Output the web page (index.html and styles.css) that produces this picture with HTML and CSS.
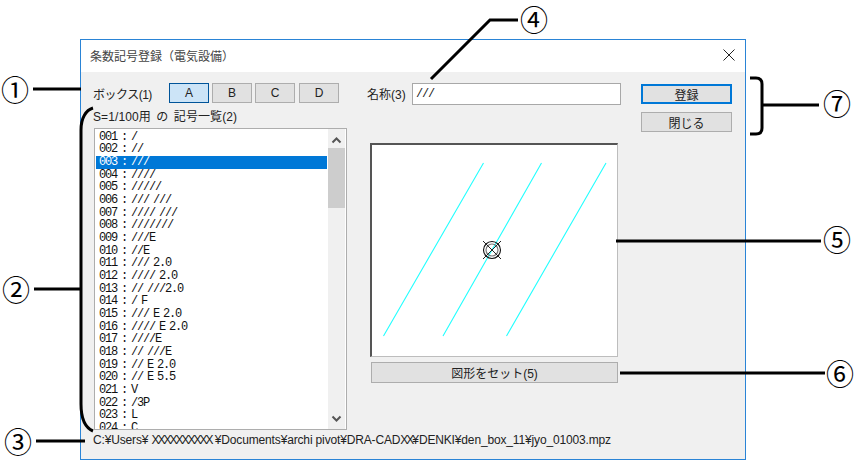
FILE: index.html
```html
<!DOCTYPE html>
<html lang="ja">
<head>
<meta charset="utf-8">
<title>条数記号登録</title>
<link rel="stylesheet" href="styles.css">
</head>
<body>
<div class="page">
  <section class="dialog">
    <header class="titlebar">
      <span class="title">条数記号登録（電気設備）</span>
      <svg class="close" width="12" height="12" viewBox="0 0 12 12"><path d="M.5.5l11 11M11.5.5l-11 11" stroke="#222" stroke-width="1" fill="none"/></svg>
    </header>
    <div class="content">
      <div class="main">
        <div class="left">
          <div class="boxes">
            <span class="box-label">ボックス(1)</span>
            <button class="btn tab active">A</button>
            <button class="btn tab">B</button>
            <button class="btn tab">C</button>
            <button class="btn tab d">D</button>
          </div>
          <div class="list-label">S=1/100用 の 記号一覧(2)</div>
          <div class="list">
            <ul class="rows">
              <li>001 : /</li>
              <li>002 : //</li>
              <li class="sel">003 : ///</li>
              <li>004 : ////</li>
              <li>005 : /////</li>
              <li>006 : /// ///</li>
              <li>007 : //// ///</li>
              <li>008 : ///////</li>
              <li>009 : ///E</li>
              <li>010 : //E</li>
              <li>011 : /// 2.0</li>
              <li>012 : //// 2.0</li>
              <li>013 : // ///2.0</li>
              <li>014 : / F</li>
              <li>015 : /// E 2.0</li>
              <li>016 : //// E 2.0</li>
              <li>017 : ////E</li>
              <li>018 : // ///E</li>
              <li>019 : // E 2.0</li>
              <li>020 : // E 5.5</li>
              <li>021 : V</li>
              <li>022 : /3P</li>
              <li>023 : L</li>
              <li>024 : C</li>
            </ul>
            <div class="scrollbar">
              <svg class="arrow" width="17" height="17" viewBox="0 0 17 17"><path d="M4.500 10.500l4-4 4 4" stroke="#555" stroke-width="2" fill="none"/></svg>
              <div class="track"><div class="thumb"></div></div>
              <svg class="arrow" width="17" height="17" viewBox="0 0 17 17"><path d="M4.500 6.500l4 4 4-4" stroke="#555" stroke-width="2" fill="none"/></svg>
            </div>
          </div>
        </div>
        <div class="center">
          <div class="name-row">
            <label class="name-label">名称(3)</label>
            <div class="input">///</div>
          </div>
          <div class="preview">
            <svg class="drawing" width="245" height="210" viewBox="372 146 245 210">
              <g stroke="#2ff" stroke-width="1.100" fill="none">
                <path d="M383.500 337L483.500 164M443 337L541.500 164M506.500 337L606 164"/>
              </g>
              <g fill="none">
                <circle cx="492" cy="251" r="8.500" stroke="#111" stroke-width="1.100"/>
                <circle cx="492" cy="251" r="6" stroke="#777" stroke-width="1.200"/>
                <path d="M483 242l18 18M501 242l-18 18" stroke="#222"/>
              </g>
            </svg>
          </div>
          <button class="btn set">図形をセット(5)</button>
        </div>
        <div class="actions">
          <button class="btn action primary">登録</button>
          <button class="btn action">閉じる</button>
        </div>
      </div>
      <div class="path">C:¥Users¥ <span class="mask">XXXXXXXXXX</span> ¥Documents¥archi pivot¥DRA-CAD<span class="mask">XX</span>¥DENKI¥den_box_11¥jyo_01003.mpz</div>
    </div>
  </section>

  <svg class="callouts" width="857" height="463" viewBox="0 0 857 463">
    <g stroke="#000" stroke-width="3" fill="none">
      <path d="M33 89H81"/>
      <path d="M93 108C86 110 81 118 81 130V404C81 420 86 428 93 431"/>
      <path d="M34 289H81"/>
      <path d="M36 441H85"/>
      <path d="M518 20H490L431 79"/>
      <path d="M616 241H821"/>
      <path d="M620 373H825"/>
      <path d="M750 78H756C760 78 762 80 762 84V128C762 132 760 134 756 134H750"/>
      <path d="M763 105H819"/>
    </g>
  </svg>
  <span class="num n1">①</span>
  <span class="num n2">②</span>
  <span class="num n3">③</span>
  <span class="num n4">④</span>
  <span class="num n5">⑤</span>
  <span class="num n6">⑥</span>
  <span class="num n7">⑦</span>
</div>
</body>
</html>
```

FILE: styles.css
```css
* { box-sizing: border-box; }
html, body { margin: 0; padding: 0; background: #fff; }
body { font-family: "Liberation Sans", "Noto Sans CJK JP", sans-serif; font-size: 12px; color: #222; }

.page { position: relative; width: 857px; height: 463px; overflow: hidden; padding: 39px 0 0 80px; }

.dialog { width: 666px; height: 421px; border: 1px solid #2a84d6; background: #f0f0f0; display: flex; flex-direction: column; }
.titlebar { height: 32px; background: #fff; display: flex; align-items: center; justify-content: space-between; padding: 0 10px 2px 9px; flex: none; }
.title { color: #444; font-size: 12px; }
.close { display: block; }

.content { flex: 1; padding: 11px 0 0 12px; }
.main { display: flex; }
.left { width: 255px; flex: none; }
.boxes { display: flex; align-items: center; height: 20px; }
.box-label { width: 76px; flex: none; letter-spacing: -0.5px; }
.btn { font: inherit; color: #222; background: #e1e1e1; border: 1px solid #adadad; padding: 0; margin: 0; display: block; }
.tab { width: 40px; height: 20px; margin-right: 3px; }
.tab.d { margin-left: 1px; }
.tab.active { background: #cce4f7; border-color: #005499; }

.list-label { margin-top: 6px; height: 16px; line-height: 16px; word-spacing: 2px; letter-spacing: 0.1px; }
.list { margin-top: 3px; height: 302px; margin-left: 1px; width: 253px; background: #fff; border: 1px solid #adadad; display: flex; overflow: hidden; }
.rows { list-style: none; margin: 0 1px 0 0; padding: 1.5px 0 0 1px; flex: 1; overflow: hidden; font-family: "Liberation Mono", monospace; font-size: 12px; letter-spacing: -1.2px; word-spacing: -2px; color: #111; }
.rows li { height: 12.68px; line-height: 13px; padding-left: 3px; white-space: pre; }
.rows li.sel { background: #0078d7; color: #fff; }
.scrollbar { width: 17px; flex: none; margin-right: 1px; padding: 3px 0 2px; display: flex; flex-direction: column; background: #f0f0f0; }
.arrow { display: block; flex: none; }
.track { flex: 1; }
.thumb { height: 60px; margin-top: -1px; background: #cdcdcd; }

.center { width: 254px; margin-left: 19px; flex: none; }
.name-row { display: flex; align-items: center; height: 23px; margin-top: -1px; }
.name-label { width: 45px; flex: none; }
.input { width: 209px; height: 22px; background: #fff; border: 1px solid #a8a8a8; font-family: "Liberation Mono", monospace; font-size: 12px; letter-spacing: -1.2px; line-height: 20px; padding-left: 3px; }
.preview { margin: 38px 0 0 3px; width: 248px; height: 214px; background: #fff; border-style: solid; border-width: 2px 1px 1px 2px; border-color: #555 #bdbdbd #bdbdbd #555; }
.drawing { display: block; }
.set { margin: 5px 0 0 4px; width: 247px; height: 21px; }

.actions { margin: 1px 0 0 20px; width: 92px; flex: none; }
.action { width: 91px; height: 20px; margin-bottom: 8px; }
.primary { border: 2px solid #0078d7; }

.path { margin-top: 3px; height: 14px; line-height: 14px; white-space: pre; letter-spacing: -0.15px; }
.mask { letter-spacing: -2px; }

.callouts { position: absolute; left: 0; top: 0; pointer-events: none; }
.num { position: absolute; font-family: "Noto Sans CJK JP", sans-serif; font-size: 28px; line-height: 30px; width: 30px; height: 30px; text-align: center; color: #000; }
.n1 { left: 0; top: 74px; }
.n2 { left: 1px; top: 274px; }
.n3 { left: 3px; top: 426px; }
.n4 { left: 519px; top: 4px; }
.n5 { left: 822px; top: 224px; }
.n6 { left: 825px; top: 358px; }
.n7 { left: 822px; top: 88px; }
```
